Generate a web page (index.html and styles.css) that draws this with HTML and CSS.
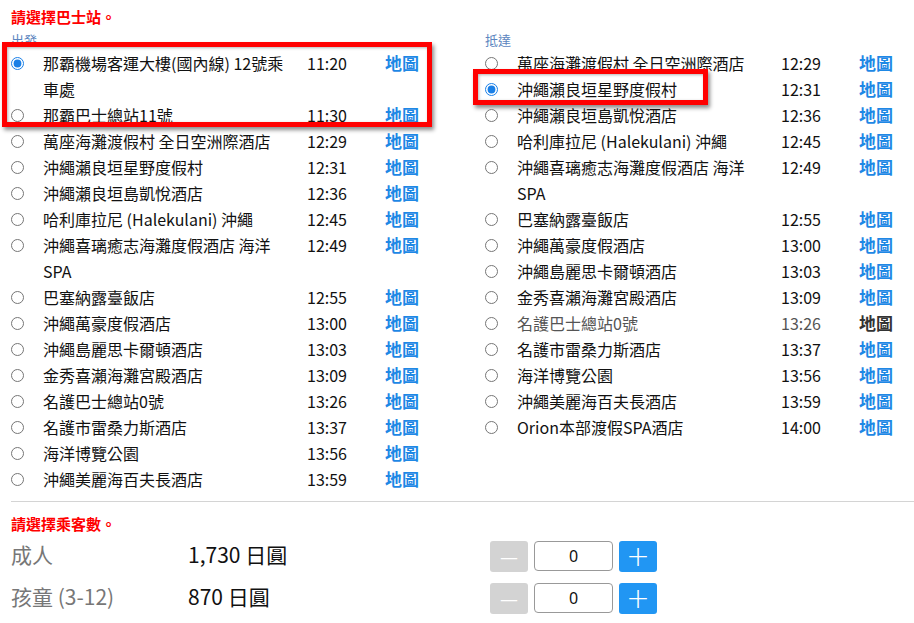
FILE: index.html
```html
<!DOCTYPE html>
<html lang="zh-Hant">
<head>
    <meta charset="UTF-8">
    <meta name="viewport" content="width=device-width, initial-scale=1.0">
    <title>巴士站</title>
    <link rel="stylesheet" href="styles.css">
</head>
<body>
    <div class="page">
        <p class="notice">請選擇巴士站。</p>

        <div class="stops">
            <!-- 出發 -->
            <div class="col">
                <div class="col-label">出發</div>
                <div class="picked">
                    <label class="row">
                        <input type="radio" name="from" checked>
                        <span class="name">那霸機場客運大樓(國內線) 12號乘車處</span>
                        <span class="time">11:20</span>
                        <a class="map" href="#">地圖</a>
                    </label>
                    <label class="row">
                        <input type="radio" name="from">
                        <span class="name">那霸巴士總站11號</span>
                        <span class="time">11:30</span>
                        <a class="map" href="#">地圖</a>
                    </label>
                </div>
                <label class="row"><input type="radio" name="from"><span class="name">萬座海灘渡假村 全日空洲際酒店</span><span class="time">12:29</span><a class="map" href="#">地圖</a></label>
                <label class="row"><input type="radio" name="from"><span class="name">沖繩瀨良垣星野度假村</span><span class="time">12:31</span><a class="map" href="#">地圖</a></label>
                <label class="row"><input type="radio" name="from"><span class="name">沖繩瀨良垣島凱悅酒店</span><span class="time">12:36</span><a class="map" href="#">地圖</a></label>
                <label class="row"><input type="radio" name="from"><span class="name">哈利庫拉尼 (Halekulani) 沖繩</span><span class="time">12:45</span><a class="map" href="#">地圖</a></label>
                <label class="row"><input type="radio" name="from"><span class="name">沖繩喜璃癒志海灘度假酒店 海洋SPA</span><span class="time">12:49</span><a class="map" href="#">地圖</a></label>
                <label class="row"><input type="radio" name="from"><span class="name">巴塞納露臺飯店</span><span class="time">12:55</span><a class="map" href="#">地圖</a></label>
                <label class="row"><input type="radio" name="from"><span class="name">沖繩萬豪度假酒店</span><span class="time">13:00</span><a class="map" href="#">地圖</a></label>
                <label class="row"><input type="radio" name="from"><span class="name">沖繩島麗思卡爾頓酒店</span><span class="time">13:03</span><a class="map" href="#">地圖</a></label>
                <label class="row"><input type="radio" name="from"><span class="name">金秀喜瀨海灘宮殿酒店</span><span class="time">13:09</span><a class="map" href="#">地圖</a></label>
                <label class="row"><input type="radio" name="from"><span class="name">名護巴士總站0號</span><span class="time">13:26</span><a class="map" href="#">地圖</a></label>
                <label class="row"><input type="radio" name="from"><span class="name">名護市雷桑力斯酒店</span><span class="time">13:37</span><a class="map" href="#">地圖</a></label>
                <label class="row"><input type="radio" name="from"><span class="name">海洋博覽公園</span><span class="time">13:56</span><a class="map" href="#">地圖</a></label>
                <label class="row"><input type="radio" name="from"><span class="name">沖繩美麗海百夫長酒店</span><span class="time">13:59</span><a class="map" href="#">地圖</a></label>
            </div>

            <!-- 抵達 -->
            <div class="col">
                <div class="col-label">抵達</div>
                <label class="row"><input type="radio" name="to"><span class="name">萬座海灘渡假村 全日空洲際酒店</span><span class="time">12:29</span><a class="map" href="#">地圖</a></label>
                <label class="row marked"><input type="radio" name="to" checked><span class="name">沖繩瀨良垣星野度假村</span><span class="time">12:31</span><a class="map" href="#">地圖</a></label>
                <label class="row"><input type="radio" name="to"><span class="name">沖繩瀨良垣島凱悅酒店</span><span class="time">12:36</span><a class="map" href="#">地圖</a></label>
                <label class="row"><input type="radio" name="to"><span class="name">哈利庫拉尼 (Halekulani) 沖繩</span><span class="time">12:45</span><a class="map" href="#">地圖</a></label>
                <label class="row"><input type="radio" name="to"><span class="name">沖繩喜璃癒志海灘度假酒店 海洋SPA</span><span class="time">12:49</span><a class="map" href="#">地圖</a></label>
                <label class="row"><input type="radio" name="to"><span class="name">巴塞納露臺飯店</span><span class="time">12:55</span><a class="map" href="#">地圖</a></label>
                <label class="row"><input type="radio" name="to"><span class="name">沖繩萬豪度假酒店</span><span class="time">13:00</span><a class="map" href="#">地圖</a></label>
                <label class="row"><input type="radio" name="to"><span class="name">沖繩島麗思卡爾頓酒店</span><span class="time">13:03</span><a class="map" href="#">地圖</a></label>
                <label class="row"><input type="radio" name="to"><span class="name">金秀喜瀨海灘宮殿酒店</span><span class="time">13:09</span><a class="map" href="#">地圖</a></label>
                <label class="row muted"><input type="radio" name="to"><span class="name">名護巴士總站0號</span><span class="time">13:26</span><a class="map" href="#">地圖</a></label>
                <label class="row"><input type="radio" name="to"><span class="name">名護市雷桑力斯酒店</span><span class="time">13:37</span><a class="map" href="#">地圖</a></label>
                <label class="row"><input type="radio" name="to"><span class="name">海洋博覽公園</span><span class="time">13:56</span><a class="map" href="#">地圖</a></label>
                <label class="row"><input type="radio" name="to"><span class="name">沖繩美麗海百夫長酒店</span><span class="time">13:59</span><a class="map" href="#">地圖</a></label>
                <label class="row"><input type="radio" name="to"><span class="name">Orion本部渡假SPA酒店</span><span class="time">14:00</span><a class="map" href="#">地圖</a></label>
            </div>
        </div>

        <hr class="divider">

        <p class="notice small">請選擇乘客數。</p>

        <div class="pax">
            <div class="pax-row">
                <span class="pax-type">成人</span>
                <span class="pax-price">1,730 日圓</span>
                <div class="counter">
                    <button class="btn minus">—</button>
                    <input class="count" type="text" value="0">
                    <button class="btn plus">+</button>
                </div>
            </div>
            <div class="pax-row">
                <span class="pax-type">孩童 (3-12)</span>
                <span class="pax-price">870 日圓</span>
                <div class="counter">
                    <button class="btn minus">—</button>
                    <input class="count" type="text" value="0">
                    <button class="btn plus">+</button>
                </div>
            </div>
        </div>
    </div>
</body>
</html>
```

FILE: styles.css
```css
body {
    margin: 0;
    background-color: #fff;
    color: #111;
    font-family: "Noto Sans CJK TC", "Noto Sans", sans-serif;
}
.page {
    padding: 0 0 0 11px;
}
.notice {
    margin: 6px 0 0;
    color: #f00;
    font-size: 15px;
    font-weight: bold;
    line-height: 22px;
}
.notice.small {
    margin-top: 12px;
    line-height: 20px;
}
/* two station lists side by side */
.stops {
    display: grid;
    grid-template-columns: 474px 1fr;
}
.col-label {
    margin-top: 2px;
    height: 20px;
    color: #5d86c0;
    font-size: 13px;
    line-height: 20px;
}
.row {
    display: grid;
    grid-template-columns: 32px 264px 78px auto;
    align-items: start;
    font-size: 16px;
    line-height: 26px;
    position: relative;
}
.row input {
    margin: 7px 0 0;
    width: 13px;
    height: 13px;
    accent-color: #1a7fe6;
}
.row .name {
    padding-right: 14px;
}
.map {
    color: #1e88e5;
    font-weight: bold;
    font-size: 17px;
    text-decoration: none;
}
.row.muted .name,
.row.muted .time {
    color: #555;
}
.row.muted .map {
    color: #333;
}
/* red annotation frames */
.picked {
    position: relative;
}
.picked::after,
.row.marked::after {
    content: "";
    position: absolute;
    border: 5px solid #f00;
    box-shadow: 2px 3px 4px rgba(0, 0, 0, 0.45), inset 1px 1px 3px rgba(0, 0, 0, 0.3);
    pointer-events: none;
}
.picked::after {
    top: -8px;
    left: -9px;
    width: 420px;
    height: 75px;
}
.row.marked::after {
    top: -7px;
    left: -12px;
    width: 225px;
    height: 26px;
}
.divider {
    margin: 9px 0 0;
    border: none;
    border-top: 1px solid #d4d4d4;
}
/* passengers */
.pax-row {
    display: grid;
    grid-template-columns: 177px 302px auto;
    align-items: center;
    height: 42px;
}
.pax-row:first-child {
    margin-top: 1px;
}
.pax-type,
.pax-price {
    font-size: 21px;
    line-height: 28px;
    margin-bottom: 5px;
}
.pax-type {
    color: #777;
}
.counter {
    display: flex;
    gap: 6px;
    align-items: center;
}
.btn {
    width: 38px;
    height: 31px;
    border: none;
    border-radius: 3px;
    color: #fff;
    font-family: "DejaVu Sans", sans-serif;
    padding: 0;
}
.btn.minus {
    background-color: #d3d3d3;
    font-size: 18px;
}
.btn.plus {
    background-color: #2196f3;
    font-size: 28px;
    font-weight: 300;
    line-height: 31px;
}
.count {
    box-sizing: border-box;
    width: 79px;
    height: 30px;
    border: 1px solid #999;
    border-radius: 4px;
    text-align: center;
    font-size: 16px;
    color: #111;
    font-family: "Noto Sans", sans-serif;
}
```
